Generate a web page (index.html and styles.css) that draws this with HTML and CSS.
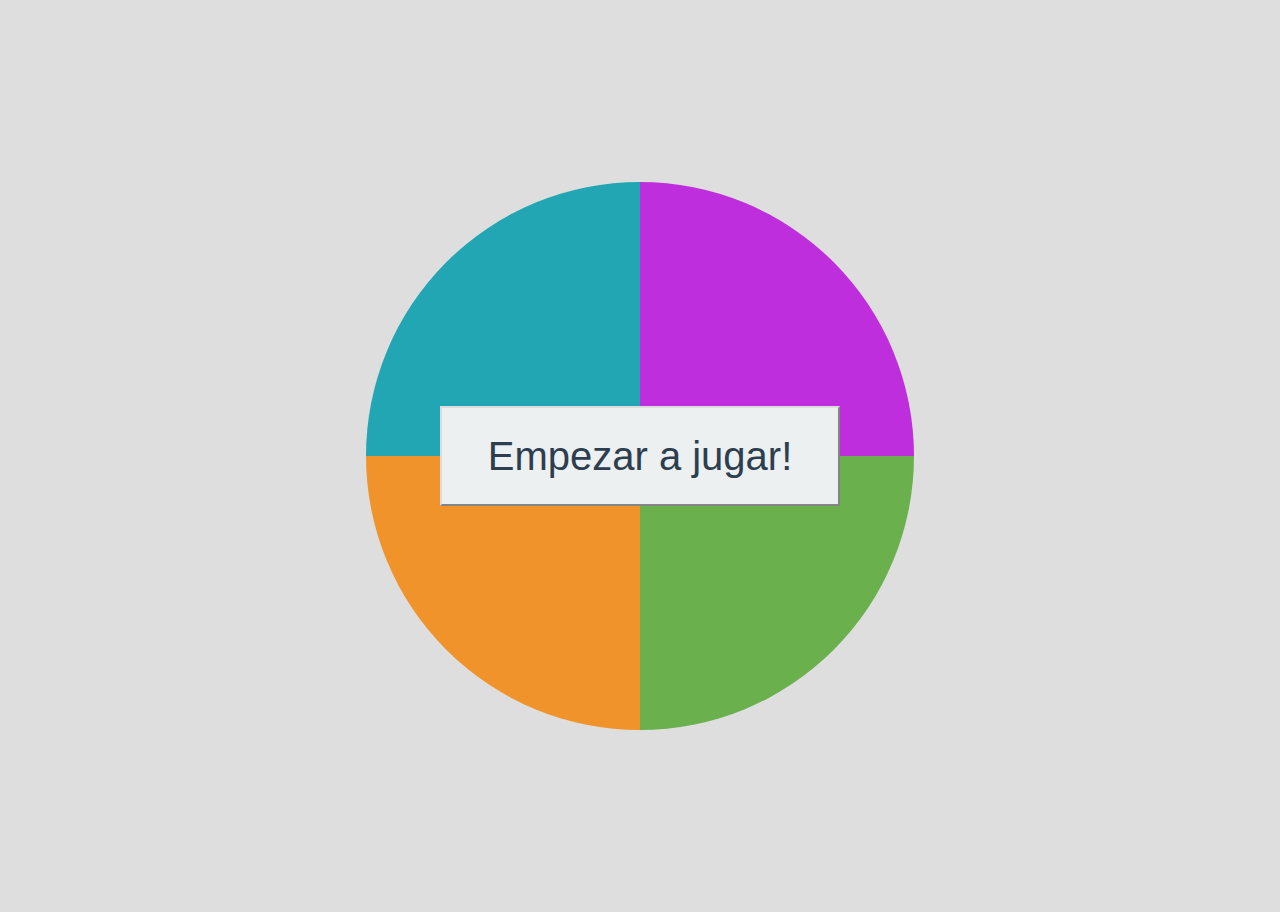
FILE: index.html
```html
<!DOCTYPE html>
<html lang="es">
<head>
<meta charset="utf-8">
<title>Simon</title>
<link rel="stylesheet" href="styles.css">
</head>
<body>
<main class="stage">
  <div class="board">
    <div class="wheel">
      <div class="quad teal"></div>
      <div class="quad magenta"></div>
      <div class="quad orange"></div>
      <div class="quad green"></div>
    </div>
    <button class="start">Empezar a jugar!</button>
  </div>
</main>
</body>
</html>
```
FILE: styles.css
```css
html, body {
  margin: 0;
  padding: 0;
  height: 100%;
}
body {
  background: #dedede;
  font-family: "Liberation Sans", Arial, sans-serif;
}
.stage {
  height: 100%;
  display: flex;
  align-items: center;
  justify-content: center;
}
.board {
  position: relative;
  width: 548px;
  height: 548px;
}
.wheel {
  width: 100%;
  height: 100%;
  border-radius: 50%;
  overflow: hidden;
  display: grid;
  grid-template-columns: 1fr 1fr;
  grid-template-rows: 1fr 1fr;
}
.teal { background: #22a6b3; }
.magenta { background: #be2edd; }
.orange { background: #f0932b; }
.green { background: #6ab04c; }
.start {
  position: absolute;
  left: 50%;
  top: 50%;
  width: 400px;
  height: 100px;
  margin-left: -200px;
  margin-top: -50px;
  box-sizing: border-box;
  background: #ecf0f1;
  color: #2c3e50;
  font-family: "Liberation Sans", Arial, sans-serif;
  font-size: 40px;
  padding: 0;
  border-style: solid;
  border-width: 2px;
  border-color: #dcdcdc #858585 #858585 #dcdcdc;
  cursor: pointer;
}
```
